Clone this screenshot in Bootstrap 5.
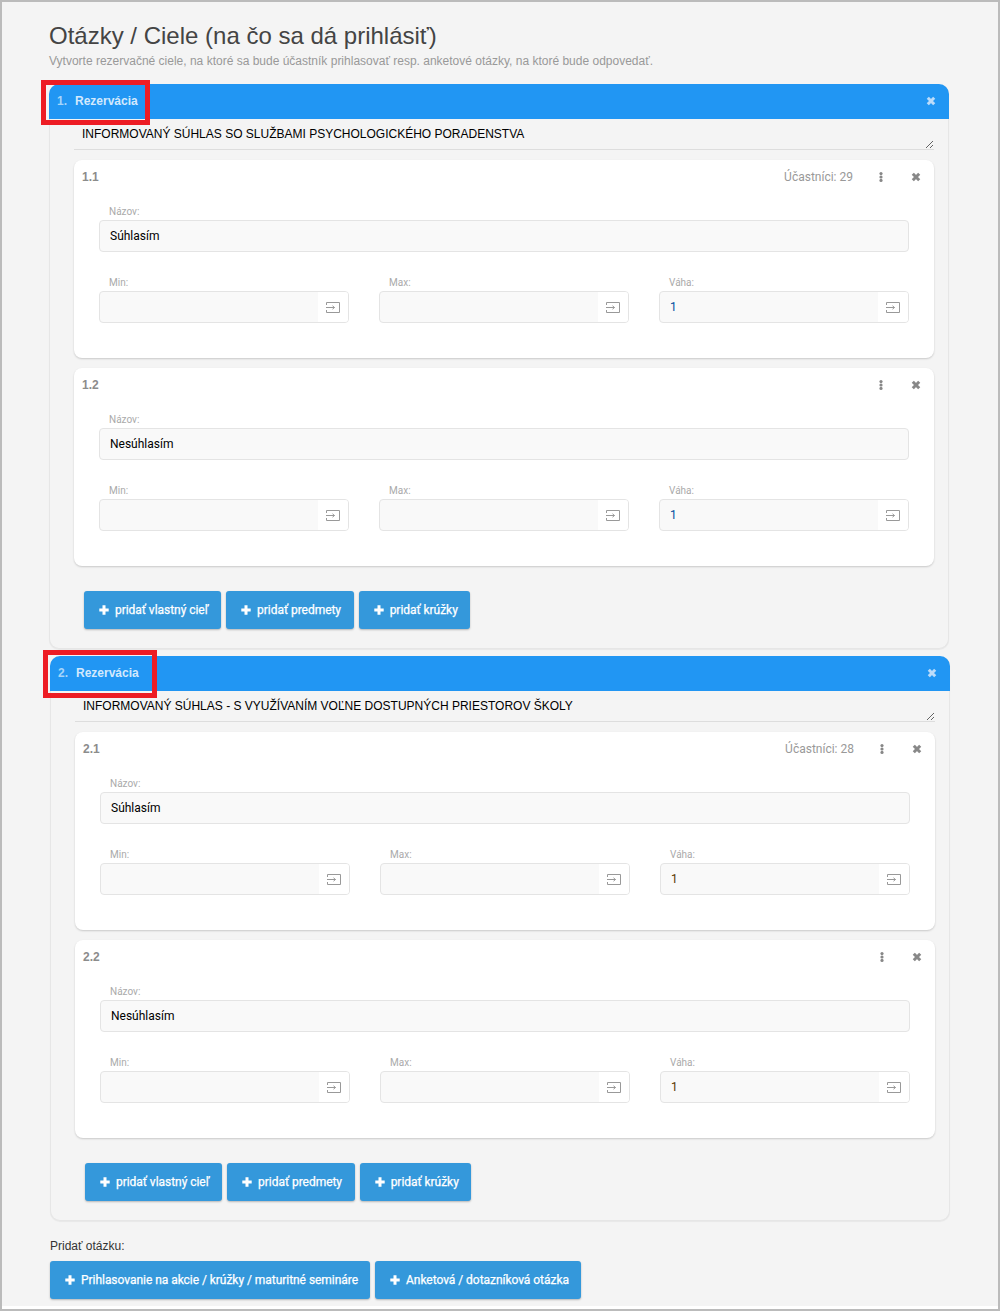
<!DOCTYPE html>
<html lang="sk">
<head>
<meta charset="utf-8">
<title>Otázky / Ciele</title>
<link rel="stylesheet" href="https://cdn.jsdelivr.net/npm/bootstrap@5.3.0/dist/css/bootstrap.min.css">
<style>
html,body{margin:0;height:1311px;overflow:hidden;background:#fff}
body{font-family:"Liberation Sans",Arial,sans-serif;font-size:12px;color:#333}
.frame{height:1311px;border:2px solid #bbb;background:#fff;position:relative}
.sheet{height:1304px;background:#f4f4f4;padding:20px 49px 0 47px}
.page-title{font-size:24px;line-height:28px;color:#444;font-weight:400;margin:0 0 3px}
.page-sub{font-size:12px;line-height:16px;color:#999;margin:0 0 15px}
.panel{background:#f4f4f4;border:1px solid #e6e6e6;border-top:0;border-radius:10px;box-shadow:0 1px 1px rgba(0,0,0,.05);margin-bottom:7px;padding:0 14px 20px 24px;height:565px}
.panel.shifted{margin-left:1px;margin-right:-1px}
.panel-head{background:#2196f3;height:35px;margin:0 -15px 0 -25px;border-radius:10px 10px 0 0;padding:0 13px 2px 8px;color:#d3e9fd;font-weight:700;font-size:12px}
.panel-head .num{width:18px;color:#a6d5fa}
.panel-x{color:#bcdcfa}
.qtext{display:block;width:100%;height:31px;background:transparent;border:0;border-bottom:1px solid #ddd;padding:8px 8px 0;font:12px/15px "Liberation Sans",Arial,sans-serif;color:#000;resize:vertical;outline:0;margin-bottom:10px;overflow:hidden}
.goal{background:#fff;border:0;border-radius:8px;box-shadow:0 1px 2px rgba(0,0,0,.18);height:198px;margin-bottom:10px;padding:0 25px;display:block}
.goal-head{height:46px;margin:0 -25px;padding:9px 13px 0 8px;color:#888}
.goal-no{font-weight:700;color:#8c8c8c;line-height:16px}
.goal-count{font-family:Roboto,sans-serif;font-size:12px;line-height:16px;color:#999;margin-right:22px}
.goal-menu{width:12px;margin-right:24px;color:#888;padding-top:3px}
.goal-x{color:#888;margin-top:3px}
.ico{display:block}
.fld-label{display:block;font-family:Roboto,sans-serif;font-size:10px;line-height:12px;color:#aaa;padding-left:10px;margin:0 0 2px}
.fld{height:32px;background:#f9f9f9;border:1px solid #e4e4e4;border-radius:4px;overflow:hidden}
.fld-input{flex:1 1 auto;min-width:0;height:30px;border:0;background:transparent;padding:0 10px;font:12px Roboto,sans-serif;color:#000;outline:0}
.fld-input.val{color:#004f9e}
.fld-input.val.alt{color:#5a3800}
.fld-add{width:30px;height:30px;background:#fff;flex:0 0 30px;color:#999}
.fld-row{display:grid;grid-template-columns:repeat(3,250px);column-gap:30px;margin-top:25px}
.acts{margin:25px 0 0 10px;gap:5px}
.act{height:38px;background:#3498db;border:0;border-radius:3px;box-shadow:0 1px 2px rgba(0,0,0,.25);color:#fff;font-family:Roboto,sans-serif;font-weight:400;font-size:12px;letter-spacing:-.04px;-webkit-text-stroke:.25px #fff;padding:0 12px 0 15px;gap:6px;white-space:nowrap}
.acts .act{padding-right:12.7px}
.act:hover,.act:focus{background:#3498db;color:#fff}
.add-label{font-size:12px;line-height:14px;color:#333;margin:18px 0 8px 1px}
.bottom-acts{margin-left:1px;gap:5px}
.mark-box{position:absolute;border:5px solid #ed1c24;pointer-events:none}
.mark-a{left:39px;top:78px;width:109px;height:45px}
.mark-b{left:41px;top:648px;width:114px;height:48px}
</style>
</head>
<body>
<svg width="0" height="0" class="position-absolute">
  <defs>
    <symbol id="i-x" viewBox="0 0 10 10"><path d="M1.800 1.800l6.400 6.400M8.200 1.800l-6.400 6.400" fill="none" stroke="currentColor" stroke-width="3"/></symbol>
    <symbol id="i-dots" viewBox="0 0 4 10"><circle cx="2" cy="1.600" r="1.600" fill="currentColor"/><circle cx="2" cy="5" r="1.600" fill="currentColor"/><circle cx="2" cy="8.400" r="1.600" fill="currentColor"/></symbol>
    <symbol id="i-plus" viewBox="0 0 10 10"><path d="M3.500.3h3v3.200h3.200v3H6.500v3.200h-3V6.500H.3v-3h3.200Z" fill="currentColor"/></symbol>
    <symbol id="i-in" viewBox="0 0 14 11"><path d="M.5 3V.5h13v10H.5V8M0 5.500h8.500M6.500 3.800l2 1.700-2 1.700" fill="none" stroke="currentColor" stroke-width="1"/></symbol>
  </defs>
</svg>
<div class="frame">
<div class="sheet">
  <h1 class="page-title">Otázky / Ciele (na čo sa dá prihlásiť)</h1>
  <p class="page-sub">Vytvorte rezervačné ciele, na ktoré sa bude účastník prihlasovať resp. anketové otázky, na ktoré bude odpovedať.</p>

  <section class="panel">
    <div class="panel-head d-flex align-items-center"><span class="num">1.</span><span>Rezervácia</span><svg class="ico panel-x ms-auto" width="10" height="10"><use href="#i-x"/></svg></div>
    <textarea class="qtext">INFORMOVANÝ SÚHLAS SO SLUŽBAMI PSYCHOLOGICKÉHO PORADENSTVA</textarea>

    <div class="card goal">
      <div class="goal-head d-flex align-items-start"><span class="goal-no">1.1</span><span class="goal-count ms-auto">Účastníci: 29</span><span class="goal-menu d-flex justify-content-center"><svg class="ico" width="4" height="10"><use href="#i-dots"/></svg></span><svg class="ico goal-x" width="10" height="10"><use href="#i-x"/></svg></div>
      <label class="fld-label">Názov:</label>
      <div class="fld d-flex"><input class="fld-input" value="Súhlasím"></div>
      <div class="fld-row">
        <div><label class="fld-label">Min:</label><div class="fld d-flex"><input class="fld-input"><span class="fld-add d-flex align-items-center justify-content-center"><svg class="ico" width="14" height="11"><use href="#i-in"/></svg></span></div></div>
        <div><label class="fld-label">Max:</label><div class="fld d-flex"><input class="fld-input"><span class="fld-add d-flex align-items-center justify-content-center"><svg class="ico" width="14" height="11"><use href="#i-in"/></svg></span></div></div>
        <div><label class="fld-label">Váha:</label><div class="fld d-flex"><input class="fld-input val" value="1"><span class="fld-add d-flex align-items-center justify-content-center"><svg class="ico" width="14" height="11"><use href="#i-in"/></svg></span></div></div>
      </div>
    </div>

    <div class="card goal">
      <div class="goal-head d-flex align-items-start"><span class="goal-no">1.2</span><span class="goal-menu d-flex justify-content-center ms-auto"><svg class="ico" width="4" height="10"><use href="#i-dots"/></svg></span><svg class="ico goal-x" width="10" height="10"><use href="#i-x"/></svg></div>
      <label class="fld-label">Názov:</label>
      <div class="fld d-flex"><input class="fld-input" value="Nesúhlasím"></div>
      <div class="fld-row">
        <div><label class="fld-label">Min:</label><div class="fld d-flex"><input class="fld-input"><span class="fld-add d-flex align-items-center justify-content-center"><svg class="ico" width="14" height="11"><use href="#i-in"/></svg></span></div></div>
        <div><label class="fld-label">Max:</label><div class="fld d-flex"><input class="fld-input"><span class="fld-add d-flex align-items-center justify-content-center"><svg class="ico" width="14" height="11"><use href="#i-in"/></svg></span></div></div>
        <div><label class="fld-label">Váha:</label><div class="fld d-flex"><input class="fld-input val" value="1"><span class="fld-add d-flex align-items-center justify-content-center"><svg class="ico" width="14" height="11"><use href="#i-in"/></svg></span></div></div>
      </div>
    </div>

    <div class="acts d-flex">
      <button class="btn act d-flex align-items-center"><svg class="ico" width="10" height="10"><use href="#i-plus"/></svg>pridať vlastný cieľ</button>
      <button class="btn act d-flex align-items-center"><svg class="ico" width="10" height="10"><use href="#i-plus"/></svg>pridať predmety</button>
      <button class="btn act d-flex align-items-center"><svg class="ico" width="10" height="10"><use href="#i-plus"/></svg>pridať krúžky</button>
    </div>
  </section>

  <section class="panel shifted">
    <div class="panel-head d-flex align-items-center"><span class="num">2.</span><span>Rezervácia</span><svg class="ico panel-x ms-auto" width="10" height="10"><use href="#i-x"/></svg></div>
    <textarea class="qtext">INFORMOVANÝ SÚHLAS - S VYUŽÍVANÍM VOĽNE DOSTUPNÝCH PRIESTOROV ŠKOLY</textarea>

    <div class="card goal">
      <div class="goal-head d-flex align-items-start"><span class="goal-no">2.1</span><span class="goal-count ms-auto">Účastníci: 28</span><span class="goal-menu d-flex justify-content-center"><svg class="ico" width="4" height="10"><use href="#i-dots"/></svg></span><svg class="ico goal-x" width="10" height="10"><use href="#i-x"/></svg></div>
      <label class="fld-label">Názov:</label>
      <div class="fld d-flex"><input class="fld-input" value="Súhlasím"></div>
      <div class="fld-row">
        <div><label class="fld-label">Min:</label><div class="fld d-flex"><input class="fld-input"><span class="fld-add d-flex align-items-center justify-content-center"><svg class="ico" width="14" height="11"><use href="#i-in"/></svg></span></div></div>
        <div><label class="fld-label">Max:</label><div class="fld d-flex"><input class="fld-input"><span class="fld-add d-flex align-items-center justify-content-center"><svg class="ico" width="14" height="11"><use href="#i-in"/></svg></span></div></div>
        <div><label class="fld-label">Váha:</label><div class="fld d-flex"><input class="fld-input val alt" value="1"><span class="fld-add d-flex align-items-center justify-content-center"><svg class="ico" width="14" height="11"><use href="#i-in"/></svg></span></div></div>
      </div>
    </div>

    <div class="card goal">
      <div class="goal-head d-flex align-items-start"><span class="goal-no">2.2</span><span class="goal-menu d-flex justify-content-center ms-auto"><svg class="ico" width="4" height="10"><use href="#i-dots"/></svg></span><svg class="ico goal-x" width="10" height="10"><use href="#i-x"/></svg></div>
      <label class="fld-label">Názov:</label>
      <div class="fld d-flex"><input class="fld-input" value="Nesúhlasím"></div>
      <div class="fld-row">
        <div><label class="fld-label">Min:</label><div class="fld d-flex"><input class="fld-input"><span class="fld-add d-flex align-items-center justify-content-center"><svg class="ico" width="14" height="11"><use href="#i-in"/></svg></span></div></div>
        <div><label class="fld-label">Max:</label><div class="fld d-flex"><input class="fld-input"><span class="fld-add d-flex align-items-center justify-content-center"><svg class="ico" width="14" height="11"><use href="#i-in"/></svg></span></div></div>
        <div><label class="fld-label">Váha:</label><div class="fld d-flex"><input class="fld-input val alt" value="1"><span class="fld-add d-flex align-items-center justify-content-center"><svg class="ico" width="14" height="11"><use href="#i-in"/></svg></span></div></div>
      </div>
    </div>

    <div class="acts d-flex">
      <button class="btn act d-flex align-items-center"><svg class="ico" width="10" height="10"><use href="#i-plus"/></svg>pridať vlastný cieľ</button>
      <button class="btn act d-flex align-items-center"><svg class="ico" width="10" height="10"><use href="#i-plus"/></svg>pridať predmety</button>
      <button class="btn act d-flex align-items-center"><svg class="ico" width="10" height="10"><use href="#i-plus"/></svg>pridať krúžky</button>
    </div>
  </section>

  <p class="add-label">Pridať otázku:</p>
  <div class="bottom-acts d-flex">
    <button class="btn act d-flex align-items-center"><svg class="ico" width="10" height="10"><use href="#i-plus"/></svg>Prihlasovanie na akcie / krúžky / maturitné semináre</button>
    <button class="btn act d-flex align-items-center"><svg class="ico" width="10" height="10"><use href="#i-plus"/></svg>Anketová / dotazníková otázka</button>
  </div>
</div>
<div class="mark-box mark-a"></div>
<div class="mark-box mark-b"></div>
</div>
<script src="https://cdn.jsdelivr.net/npm/bootstrap@5.3.0/dist/js/bootstrap.bundle.min.js"></script>
</body>
</html>
